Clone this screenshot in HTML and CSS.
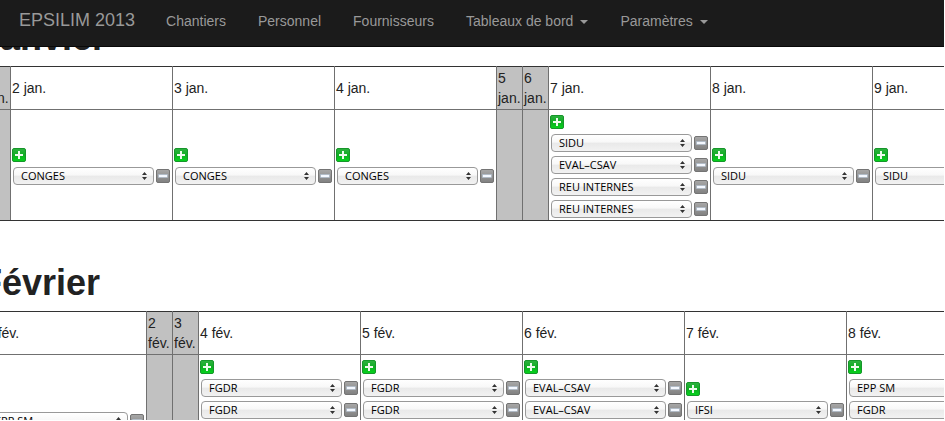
FILE: index.html
```html
<!DOCTYPE html>
<html lang="fr">
<head>
<meta charset="utf-8">
<title>EPSILIM 2013</title>
<link rel="stylesheet" href="styles.css">
</head>
<body>
<svg class="sprite" aria-hidden="true">
  <defs>
    <linearGradient id="green" x1="0" y1="0" x2="0" y2="1"><stop offset="0" stop-color="#2fb141"/><stop offset=".5" stop-color="#0fae22"/><stop offset="1" stop-color="#05d51c"/></linearGradient>
    <linearGradient id="grey" x1="0" y1="0" x2="0" y2="1"><stop offset="0" stop-color="#a8a8a8"/><stop offset="1" stop-color="#808080"/></linearGradient>
  </defs>
  <symbol id="plus" viewBox="0 0 14 14">
    <rect x=".5" y=".5" width="13" height="13" rx="1.5" fill="url(#green)" stroke="#16962a"/>
    <path d="M6 3h2v3h3v2H8v3H6V8H3V6h3z" fill="#eefbee"/>
  </symbol>
  <symbol id="minus" viewBox="0 0 14 14">
    <rect x=".5" y=".5" width="13" height="13" rx="1.5" fill="url(#grey)" stroke="#747474"/>
    <rect x="2.5" y="5.5" width="9" height="3" fill="#f4f8ff" stroke="#a6b4c4" stroke-width=".6"/>
  </symbol>
</svg>
<nav class="navbar">
  <a class="brand" href="#">EPSILIM 2013</a>
  <a href="#">Chantiers</a>
  <a href="#">Personnel</a>
  <a href="#">Fournisseurs</a>
  <a href="#">Tableaux de bord<span class="caret"></span></a>
  <a href="#">Paramètres<span class="caret"></span></a>
</nav>
<main>
  <div class="schedule">
    <section class="month">
      <h2>Janvier</h2>
      <table>
        <thead>
          <tr><th class="off">1 jan.</th><th>2 jan.</th><th>3 jan.</th><th>4 jan.</th><th class="off">5 jan.</th><th class="off">6 jan.</th><th>7 jan.</th><th>8 jan.</th><th>9 jan.</th></tr>
        </thead>
        <tbody>
          <tr>
            <td class="off"></td>
            <td>
              <button class="add" aria-label="Ajouter"><svg><use href="#plus"/></svg></button>
              <div class="task"><select aria-label="Chantier"><option>CONGES</option></select><button aria-label="Retirer"><svg><use href="#minus"/></svg></button></div>
            </td>
            <td>
              <button class="add" aria-label="Ajouter"><svg><use href="#plus"/></svg></button>
              <div class="task"><select aria-label="Chantier"><option>CONGES</option></select><button aria-label="Retirer"><svg><use href="#minus"/></svg></button></div>
            </td>
            <td>
              <button class="add" aria-label="Ajouter"><svg><use href="#plus"/></svg></button>
              <div class="task"><select aria-label="Chantier"><option>CONGES</option></select><button aria-label="Retirer"><svg><use href="#minus"/></svg></button></div>
            </td>
            <td class="off"></td>
            <td class="off"></td>
            <td>
              <button class="add" aria-label="Ajouter"><svg><use href="#plus"/></svg></button>
              <div class="task"><select aria-label="Chantier"><option>SIDU</option></select><button aria-label="Retirer"><svg><use href="#minus"/></svg></button></div>
              <div class="task"><select aria-label="Chantier"><option>EVAL–CSAV</option></select><button aria-label="Retirer"><svg><use href="#minus"/></svg></button></div>
              <div class="task"><select aria-label="Chantier"><option>REU INTERNES</option></select><button aria-label="Retirer"><svg><use href="#minus"/></svg></button></div>
              <div class="task"><select aria-label="Chantier"><option>REU INTERNES</option></select><button aria-label="Retirer"><svg><use href="#minus"/></svg></button></div>
            </td>
            <td>
              <button class="add" aria-label="Ajouter"><svg><use href="#plus"/></svg></button>
              <div class="task"><select aria-label="Chantier"><option>SIDU</option></select><button aria-label="Retirer"><svg><use href="#minus"/></svg></button></div>
            </td>
            <td>
              <button class="add" aria-label="Ajouter"><svg><use href="#plus"/></svg></button>
              <div class="task"><select aria-label="Chantier"><option>SIDU</option></select><button aria-label="Retirer"><svg><use href="#minus"/></svg></button></div>
            </td>
          </tr>
        </tbody>
      </table>
    </section>
    <section class="month">
      <h2>Février</h2>
      <table>
        <thead>
          <tr><th>1 fév.</th><th class="off">2 fév.</th><th class="off">3 fév.</th><th>4 fév.</th><th>5 fév.</th><th>6 fév.</th><th>7 fév.</th><th>8 fév.</th></tr>
        </thead>
        <tbody>
          <tr>
            <td>
              <button class="add" aria-label="Ajouter"><svg><use href="#plus"/></svg></button>
              <div class="task"><select aria-label="Chantier"><option>EPP SM</option></select><button aria-label="Retirer"><svg><use href="#minus"/></svg></button></div>
            </td>
            <td class="off"></td>
            <td class="off"></td>
            <td>
              <button class="add" aria-label="Ajouter"><svg><use href="#plus"/></svg></button>
              <div class="task"><select aria-label="Chantier"><option>FGDR</option></select><button aria-label="Retirer"><svg><use href="#minus"/></svg></button></div>
              <div class="task"><select aria-label="Chantier"><option>FGDR</option></select><button aria-label="Retirer"><svg><use href="#minus"/></svg></button></div>
              <div class="task"></div>
              <div class="task"></div>
            </td>
            <td>
              <button class="add" aria-label="Ajouter"><svg><use href="#plus"/></svg></button>
              <div class="task"><select aria-label="Chantier"><option>FGDR</option></select><button aria-label="Retirer"><svg><use href="#minus"/></svg></button></div>
              <div class="task"><select aria-label="Chantier"><option>FGDR</option></select><button aria-label="Retirer"><svg><use href="#minus"/></svg></button></div>
              <div class="task"></div>
              <div class="task"></div>
            </td>
            <td>
              <button class="add" aria-label="Ajouter"><svg><use href="#plus"/></svg></button>
              <div class="task"><select aria-label="Chantier"><option>EVAL–CSAV</option></select><button aria-label="Retirer"><svg><use href="#minus"/></svg></button></div>
              <div class="task"><select aria-label="Chantier"><option>EVAL–CSAV</option></select><button aria-label="Retirer"><svg><use href="#minus"/></svg></button></div>
              <div class="task"></div>
              <div class="task"></div>
            </td>
            <td>
              <button class="add" aria-label="Ajouter"><svg><use href="#plus"/></svg></button>
              <div class="task"><select aria-label="Chantier"><option>IFSI</option></select><button aria-label="Retirer"><svg><use href="#minus"/></svg></button></div>
              <div class="task"></div>
            </td>
            <td>
              <button class="add" aria-label="Ajouter"><svg><use href="#plus"/></svg></button>
              <div class="task"><select aria-label="Chantier"><option>EPP SM</option></select><button aria-label="Retirer"><svg><use href="#minus"/></svg></button></div>
              <div class="task"><select aria-label="Chantier"><option>FGDR</option></select><button aria-label="Retirer"><svg><use href="#minus"/></svg></button></div>
              <div class="task"></div>
              <div class="task"></div>
            </td>
          </tr>
        </tbody>
      </table>
    </section>
  </div>
</main>
</body>
</html>
```
FILE: styles.css
```css
body {
  display: flex;
  flex-direction: column;
  box-sizing: border-box;
  height: 100vh;
  margin: 0;
  padding: 0 1px 1px 0;
  overflow: hidden;
  background: #fff;
  color: #222;
  font: 14px/20px "Liberation Sans", Arial, sans-serif;
}

.sprite {
  position: absolute;
  width: 0;
  height: 0;
}

.navbar {
  display: flex;
  flex: none;
  align-items: baseline;
  padding: 10px 3px 15px;
  border-bottom: 1px solid #080808;
  background: #1b1b1b;
}

.navbar a {
  padding: 0 16px;
  color: #999;
  text-decoration: none;
  white-space: nowrap;
}

.navbar .brand {
  padding-right: 15px;
  font-size: 18px;
}

.caret {
  display: inline-block;
  margin-left: 7px;
  border: 4px solid transparent;
  border-top-color: #999;
  border-bottom: 0;
  vertical-align: middle;
}

main {
  flex: 1;
  min-height: 0;
  overflow: hidden;
}

/* The schedule is panned up and to the left inside its viewport. */
.schedule {
  margin: -29px 0 0 -20px;
}

.month + .month {
  margin-top: 42px;
}

h2 {
  margin: 0 0 8px;
  font-size: 36px;
  line-height: 40px;
}

table {
  margin-left: 4px;
  border-collapse: collapse;
  border: 1px solid #333;
}

th,
td {
  min-width: 159px;
  padding: 1px;
  border: 1px solid #707070;
  font-weight: normal;
  text-align: left;
  vertical-align: middle;
}

thead th {
  border-top-color: #333;
}

tbody td {
  border-bottom-color: #333;
}

.off {
  min-width: 23px;
  background: #c1c1c1;
}

button {
  display: block;
  flex: none;
  width: 14px;
  height: 14px;
  padding: 0;
  border: 0;
  background: none;
}

button svg {
  display: block;
  width: 14px;
  height: 14px;
}

.add {
  margin: 4px 0 2px;
}

.task {
  display: flex;
  align-items: center;
  gap: 2px;
  box-sizing: border-box;
  height: 22px;
  padding: 3px 1px 1px;
}

select {
  appearance: none;
  box-sizing: border-box;
  width: 141px;
  height: 18px;
  margin: 0;
  padding: 0 16px 0 7px;
  border: 1px solid #999;
  border-radius: 4px;
  background:
    url("data:image/svg+xml,%3Csvg xmlns='http://www.w3.org/2000/svg' width='5' height='8'%3E%3Cpath d='M0 3L2.5 0L5 3zM0 5L2.5 8L5 5z' fill='%23333'/%3E%3C/svg%3E") no-repeat right 6px center,
    linear-gradient(#fff 0%, #f8f8f8 45%, #e9e9e9 50%, #f2f2f2 100%);
  color: #000;
  font: 500 11px/16px "Open Sans", "Noto Sans", sans-serif;
}
```
